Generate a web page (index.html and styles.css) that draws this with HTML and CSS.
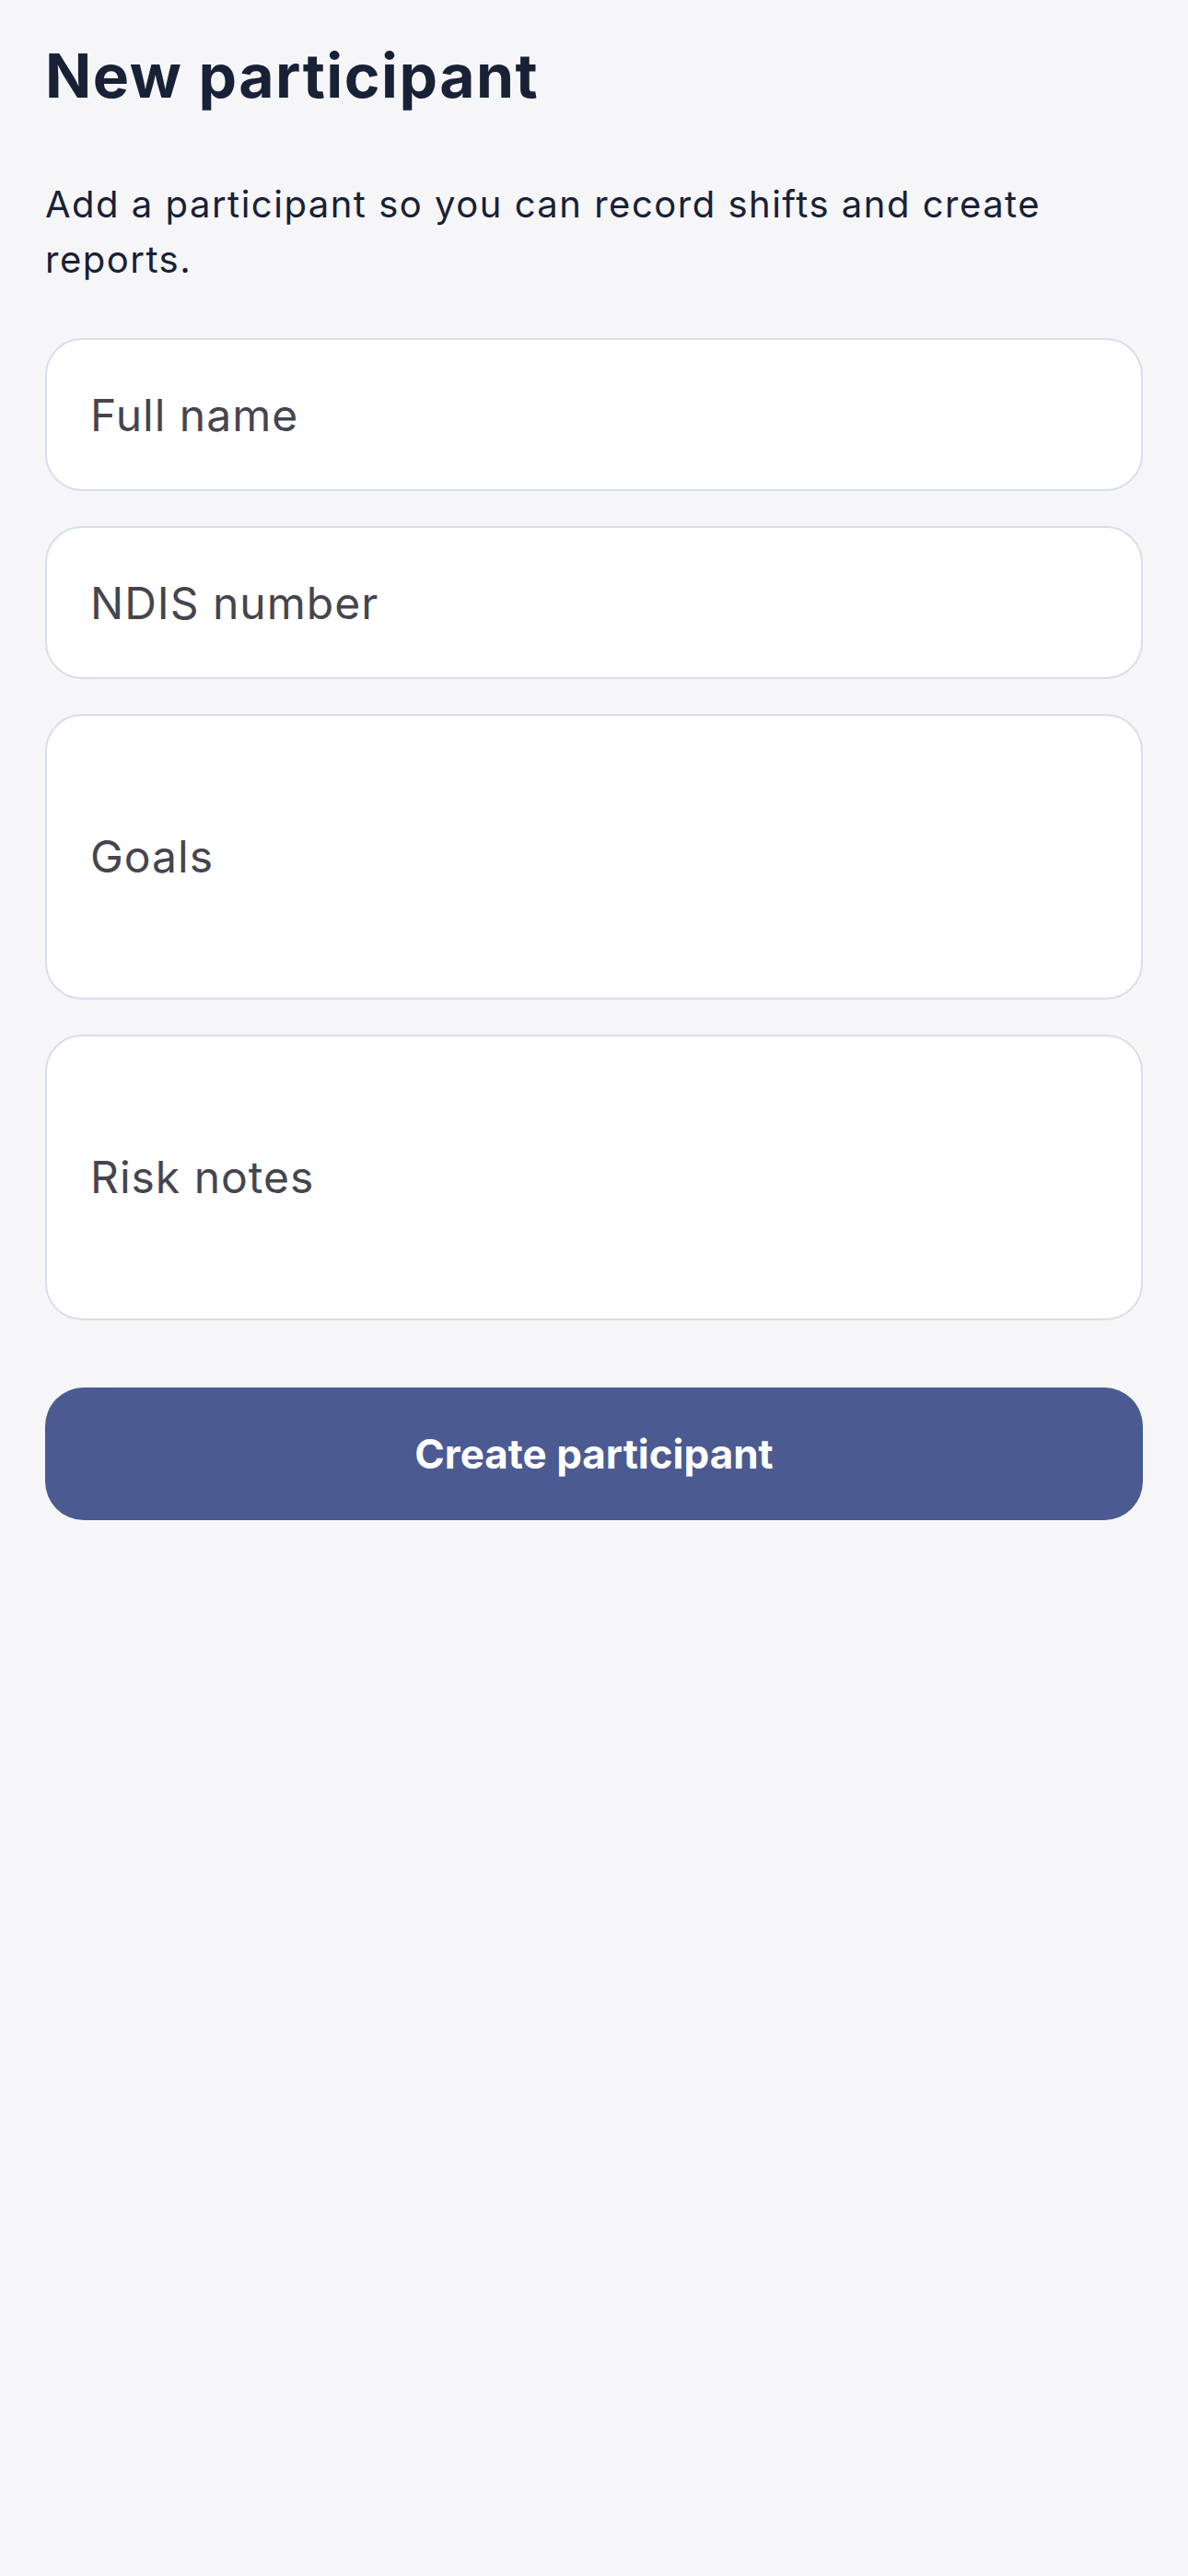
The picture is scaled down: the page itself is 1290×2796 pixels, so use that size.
FILE: index.html
```html
<!DOCTYPE html>
<html lang="en">

<head>
    <meta charset="UTF-8">
    <meta name="viewport" content="width=device-width, initial-scale=1.0">
    <title>New participant</title>
    <link rel="stylesheet" href="styles.css">
</head>

<body>
    <div class="page">
        <h1 class="page-title">New participant</h1>
        <p class="page-intro">Add a participant so you can record shifts and create reports.</p>
        <form class="form" action="javascript:;">
            <input class="field" type="text" placeholder="Full name">
            <input class="field" type="text" placeholder="NDIS number">
            <textarea class="field field-multi" placeholder="Goals"></textarea>
            <textarea class="field field-multi" placeholder="Risk notes"></textarea>
            <button class="submit" type="submit">Create participant</button>
        </form>
    </div>
</body>

</html>
```

FILE: styles.css
```css
* {
    margin: 0;
    padding: 0;
    box-sizing: border-box;
}

html,
body {
    min-height: 100%;
    background-color: #f6f6f9;
}

body {
    font-family: Inter, "Noto Sans", sans-serif;
    color: #182136;
}

.page {
    padding: 42px 49px;
}

.page-title {
    font-size: 66px;
    line-height: 80px;
    font-weight: 700;
    letter-spacing: 1.5px;
}

.page-intro {
    margin-top: 70px;
    font-size: 40px;
    line-height: 60px;
    font-weight: 400;
    letter-spacing: 1.5px;
}

.form {
    display: flex;
    flex-direction: column;
    gap: 38px;
    margin-top: 55px;
}

.field {
    display: block;
    width: 100%;
    height: 166px;
    padding: 0 47px;
    font-family: inherit;
    font-size: 48px;
    line-height: 58px;
    letter-spacing: 1px;
    color: #182136;
    background-color: #fff;
    border: 2px solid #d8deea;
    border-radius: 40px;
    outline: none;
}

.field::placeholder {
    color: #45454f;
    opacity: 1;
}

/* 多行输入框：占位文字垂直居中 */
.field-multi {
    height: 310px;
    padding-top: 124px;
    resize: none;
    overflow: hidden;
}

.submit {
    height: 144px;
    margin-top: 35px;
    font-family: inherit;
    font-size: 44px;
    font-weight: 700;
    letter-spacing: 0;
    color: #fff;
    background-color: #4b5b91;
    border: 0;
    border-radius: 42px;
    cursor: pointer;
}
```
